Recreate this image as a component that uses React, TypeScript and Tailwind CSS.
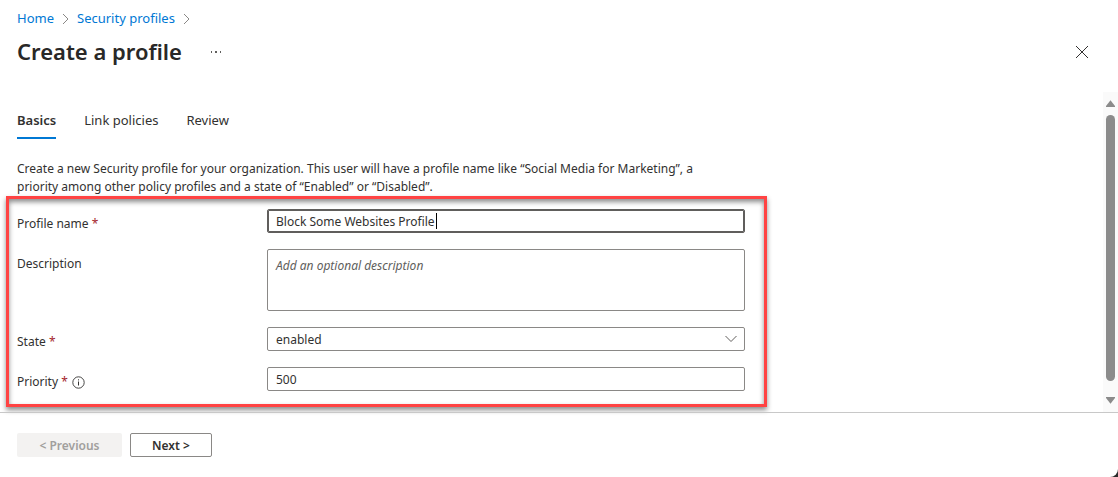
import { useState } from 'react';
import type { ReactNode } from 'react';

const TABS = ['Basics', 'Link policies', 'Review'];

const FIELD = 'block w-full rounded-xs border border-[#8a8886] bg-white px-2 text-xs text-[#323130] outline-none';

function Crumb({ children }: { children: ReactNode }) {
  return (
    <li className="flex items-center gap-2">
      <a href="#" className="text-[#0078d4]">
        {children}
      </a>
      <svg width="7" height="12" viewBox="0 0 7 12" fill="none" stroke="#8a8886" aria-hidden="true">
        <path d="M1 1l5 5-5 5" />
      </svg>
    </li>
  );
}

type RowProps = {
  id: string;
  label: string;
  required?: boolean;
  info?: boolean;
  children: ReactNode;
};

function Row({ id, label, required, info, children }: RowProps) {
  return (
    <div className="flex items-start">
      <div className="flex w-[250px] shrink-0 items-center pt-1.5 leading-[18px]">
        <label htmlFor={id}>
          {label}
          {required && <span className="text-[#a4262c]"> *</span>}
        </label>
        {info && (
          <svg className="ml-1" width="13" height="13" viewBox="0 0 13 13" fill="none" stroke="#323130" aria-hidden="true">
            <circle cx="6.5" cy="6.5" r="5.7" strokeWidth="0.9" />
            <path d="M6.5 5.5v4M6.5 3.3v1.1" />
          </svg>
        )}
      </div>
      <div className="relative min-w-0 flex-1">{children}</div>
    </div>
  );
}

function ScrollBar() {
  return (
    <div className="flex w-[15px] shrink-0 flex-col items-center gap-2 bg-[#fafafa] py-2" aria-hidden="true">
      <svg width="9" height="7" viewBox="0 0 9 7" fill="#8b8b8b">
        <path d="M4.5 0.3 9 6v1H0V6z" />
      </svg>
      <div className="mb-2 w-[9px] flex-1 rounded-full bg-[#8b8b8b]" />
      <svg width="9" height="7" viewBox="0 0 9 7" fill="#8b8b8b">
        <path d="M4.5 6.7 0 1V0h9v1z" />
      </svg>
    </div>
  );
}

export default function App() {
  const [tab, setTab] = useState('Basics');
  const [name, setName] = useState('Block Some Websites Profile');
  const [description, setDescription] = useState('');
  const [state, setState] = useState('enabled');
  const [priority, setPriority] = useState('500');

  return (
    <div className="bg-[#2b2b2b]">
      <div className="flex min-h-screen flex-col rounded-br-lg bg-white font-['Segoe_UI','Noto_Sans',sans-serif] text-xs text-[#323130]">
        <header className="px-[17px] pt-2 pb-6">
          <nav aria-label="Breadcrumb">
            <ol className="flex h-[22px] items-center gap-2 text-[13px]">
              <Crumb>Home</Crumb>
              <Crumb>Security profiles</Crumb>
            </ol>
          </nav>
          <div className="mt-1.5 flex h-8 items-center">
            <h1 className="text-[22px] font-semibold text-[#292827]">Create a profile</h1>
            <button type="button" aria-label="More" className="ml-7">
              <svg width="12" height="2" viewBox="0 0 12 2" fill="#605e5c">
                <path d="M1 0h1v2H1zM5 0h2v2H5zM10 0h1v2h-1z" />
              </svg>
            </button>
            <button type="button" aria-label="Close" className="mr-3 ml-auto">
              <svg width="14" height="14" viewBox="0 0 14 14" fill="none" stroke="#323130">
                <path d="M1 1l12 12M13 1L1 13" />
              </svg>
            </button>
          </div>
        </header>

        <div className="flex flex-1">
          <main className="min-w-0 flex-1 pb-[5px]">
            <div role="tablist" className="flex gap-7 px-[17px] pt-[18px] text-[13px]">
              {TABS.map((t) => (
                <button
                  key={t}
                  type="button"
                  role="tab"
                  aria-selected={t === tab}
                  onClick={() => setTab(t)}
                  className={`border-b-2 pb-[7px] leading-5 ${t === tab ? 'border-[#0078d4] font-semibold' : 'border-transparent'}`}
                >
                  {t}
                </button>
              ))}
            </div>

            <p className="mt-[21px] max-w-[740px] px-[17px] leading-[18px]">
              Create a new Security profile for your organization. This user will have a profile name like “Social Media for Marketing”, a priority among other policy profiles and a state of “Enabled” or “Disabled”.
            </p>

            <form className="mx-1.5 flex max-w-[761px] flex-col gap-4 border-3 border-[#ff4343] pt-2.5 pr-[19px] pb-[13px] pl-2 shadow-[0_3px_5px_rgba(0,0,0,0.45),inset_0_3px_5px_rgba(0,0,0,0.45)]">
              <Row id="name" label="Profile name" required>
                <input
                  id="name"
                  value={name}
                  onChange={(e) => setName(e.target.value)}
                  className={`${FIELD} h-6 border-[#605e5c] ring-1 ring-[#605e5c] ring-inset`}
                />
                <span className="absolute top-1 left-[169px] h-4 w-px bg-black" />
              </Row>
              <Row id="description" label="Description">
                <textarea
                  id="description"
                  value={description}
                  onChange={(e) => setDescription(e.target.value)}
                  placeholder="Add an optional description"
                  className={`${FIELD} h-[62px] resize-none py-1.5 leading-5 placeholder:text-[#605e5c] placeholder:italic`}
                />
              </Row>
              <Row id="state" label="State" required>
                <select
                  id="state"
                  value={state}
                  onChange={(e) => setState(e.target.value)}
                  className={`${FIELD} h-6 appearance-none pt-px`}
                >
                  <option>enabled</option>
                  <option>disabled</option>
                </select>
                <svg
                  className="pointer-events-none absolute top-2 right-2"
                  width="12"
                  height="8"
                  viewBox="0 0 12 8"
                  fill="none"
                  stroke="#605e5c"
                  aria-hidden="true"
                >
                  <path d="M0.5 1 6 6.5 11.5 1" />
                </svg>
              </Row>
              <Row id="priority" label="Priority" required info>
                <input
                  id="priority"
                  value={priority}
                  onChange={(e) => setPriority(e.target.value)}
                  className={`${FIELD} h-6`}
                />
              </Row>
            </form>
          </main>
          <ScrollBar />
        </div>

        <footer className="flex gap-2 border-t border-[#c8c8c8] px-[17px] py-5 font-semibold">
          <button type="button" disabled className="h-6 w-[105px] rounded-xs bg-[#f3f2f1] pt-0.5 text-[#a19f9d]">
            &lt; Previous
          </button>
          <button type="button" className="h-6 w-[82px] rounded-xs border border-[#8a8886] pt-0.5 text-[#323130]">
            Next &gt;
          </button>
        </footer>
      </div>
    </div>
  );
}
